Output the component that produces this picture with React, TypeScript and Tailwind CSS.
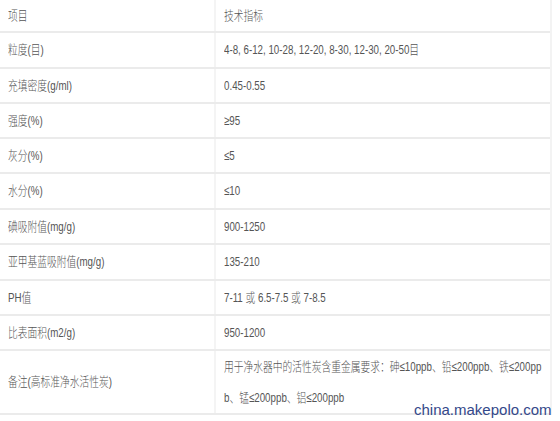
import React from "react";

const rows: { k: string; v: string; h: string }[] = [
  { k: "粒度(目)", v: "4-8, 6-12, 10-28, 12-20, 8-30, 12-30, 20-50目", h: "h-[36px]" },
  { k: "充填密度(g/ml)", v: "0.45-0.55", h: "h-[35px]" },
  { k: "强度(%)", v: "≥95", h: "h-[35px]" },
  { k: "灰分(%)", v: "≤5", h: "h-[35px]" },
  { k: "水分(%)", v: "≤10", h: "h-[36px]" },
  { k: "碘吸附值(mg/g)", v: "900-1250", h: "h-[35px]" },
  { k: "亚甲基蓝吸附值(mg/g)", v: "135-210", h: "h-[36px]" },
  { k: "PH值", v: "7-11 或 6.5-7.5 或 7-8.5", h: "h-[35px]" },
  { k: "比表面积(m2/g)", v: "950-1200", h: "h-[35px]" },
];

function T({ children }: { children: React.ReactNode }) {
  return (
    <span className="inline-block origin-left scale-x-75 whitespace-nowrap">{children}</span>
  );
}

export default function App() {
  return (
    <div
      className="relative w-[560px] h-[421px] overflow-hidden bg-white text-[13px] font-light text-[#555555]"
      style={{ fontFamily: '"Liberation Sans", "Noto Sans CJK SC", sans-serif' }}
    >
      <div className="w-[552px] border-r-2 border-[#f3f3f3]">
        <div className="flex h-[33px] border-b-2 border-[#ebebeb]">
          <div className="flex w-[216px] shrink-0 items-center border-r-2 border-[#f4f4f4] pl-2">
            <T>项目</T>
          </div>
          <div className="flex min-w-0 flex-1 items-center pl-2">
            <T>技术指标</T>
          </div>
        </div>
        {rows.map((r) => (
          <div key={r.k} className={`flex border-b-2 border-[#ebebeb] ${r.h}`}>
            <div className="flex w-[216px] shrink-0 items-center border-r-2 border-[#f4f4f4] pl-2">
              <T>{r.k}</T>
            </div>
            <div className="flex min-w-0 flex-1 items-center pl-2">
              <T>{r.v}</T>
            </div>
          </div>
        ))}
        <div className="flex h-[64px] border-b-2 border-[#ebebeb]">
          <div className="flex w-[216px] shrink-0 items-center border-r-2 border-[#f4f4f4] pl-2">
            <T>备注(高标准净水活性炭)</T>
          </div>
          <div className="flex min-w-0 flex-1 flex-col items-start justify-center pl-2 leading-[31px]">
            <T>用于净水器中的活性炭含重金属要求：砷≤10ppb、铅≤200ppb、铁≤200pp</T>
            <T>b、锰≤200ppb、铝≤200ppb</T>
          </div>
        </div>
      </div>
      <div
        className="absolute left-[414px] top-[400px] text-[15px] font-normal leading-[20px] text-[#34488a]"
        style={{ fontFamily: '"Liberation Sans", sans-serif' }}
      >
        china.makepolo.com
      </div>
    </div>
  );
}
